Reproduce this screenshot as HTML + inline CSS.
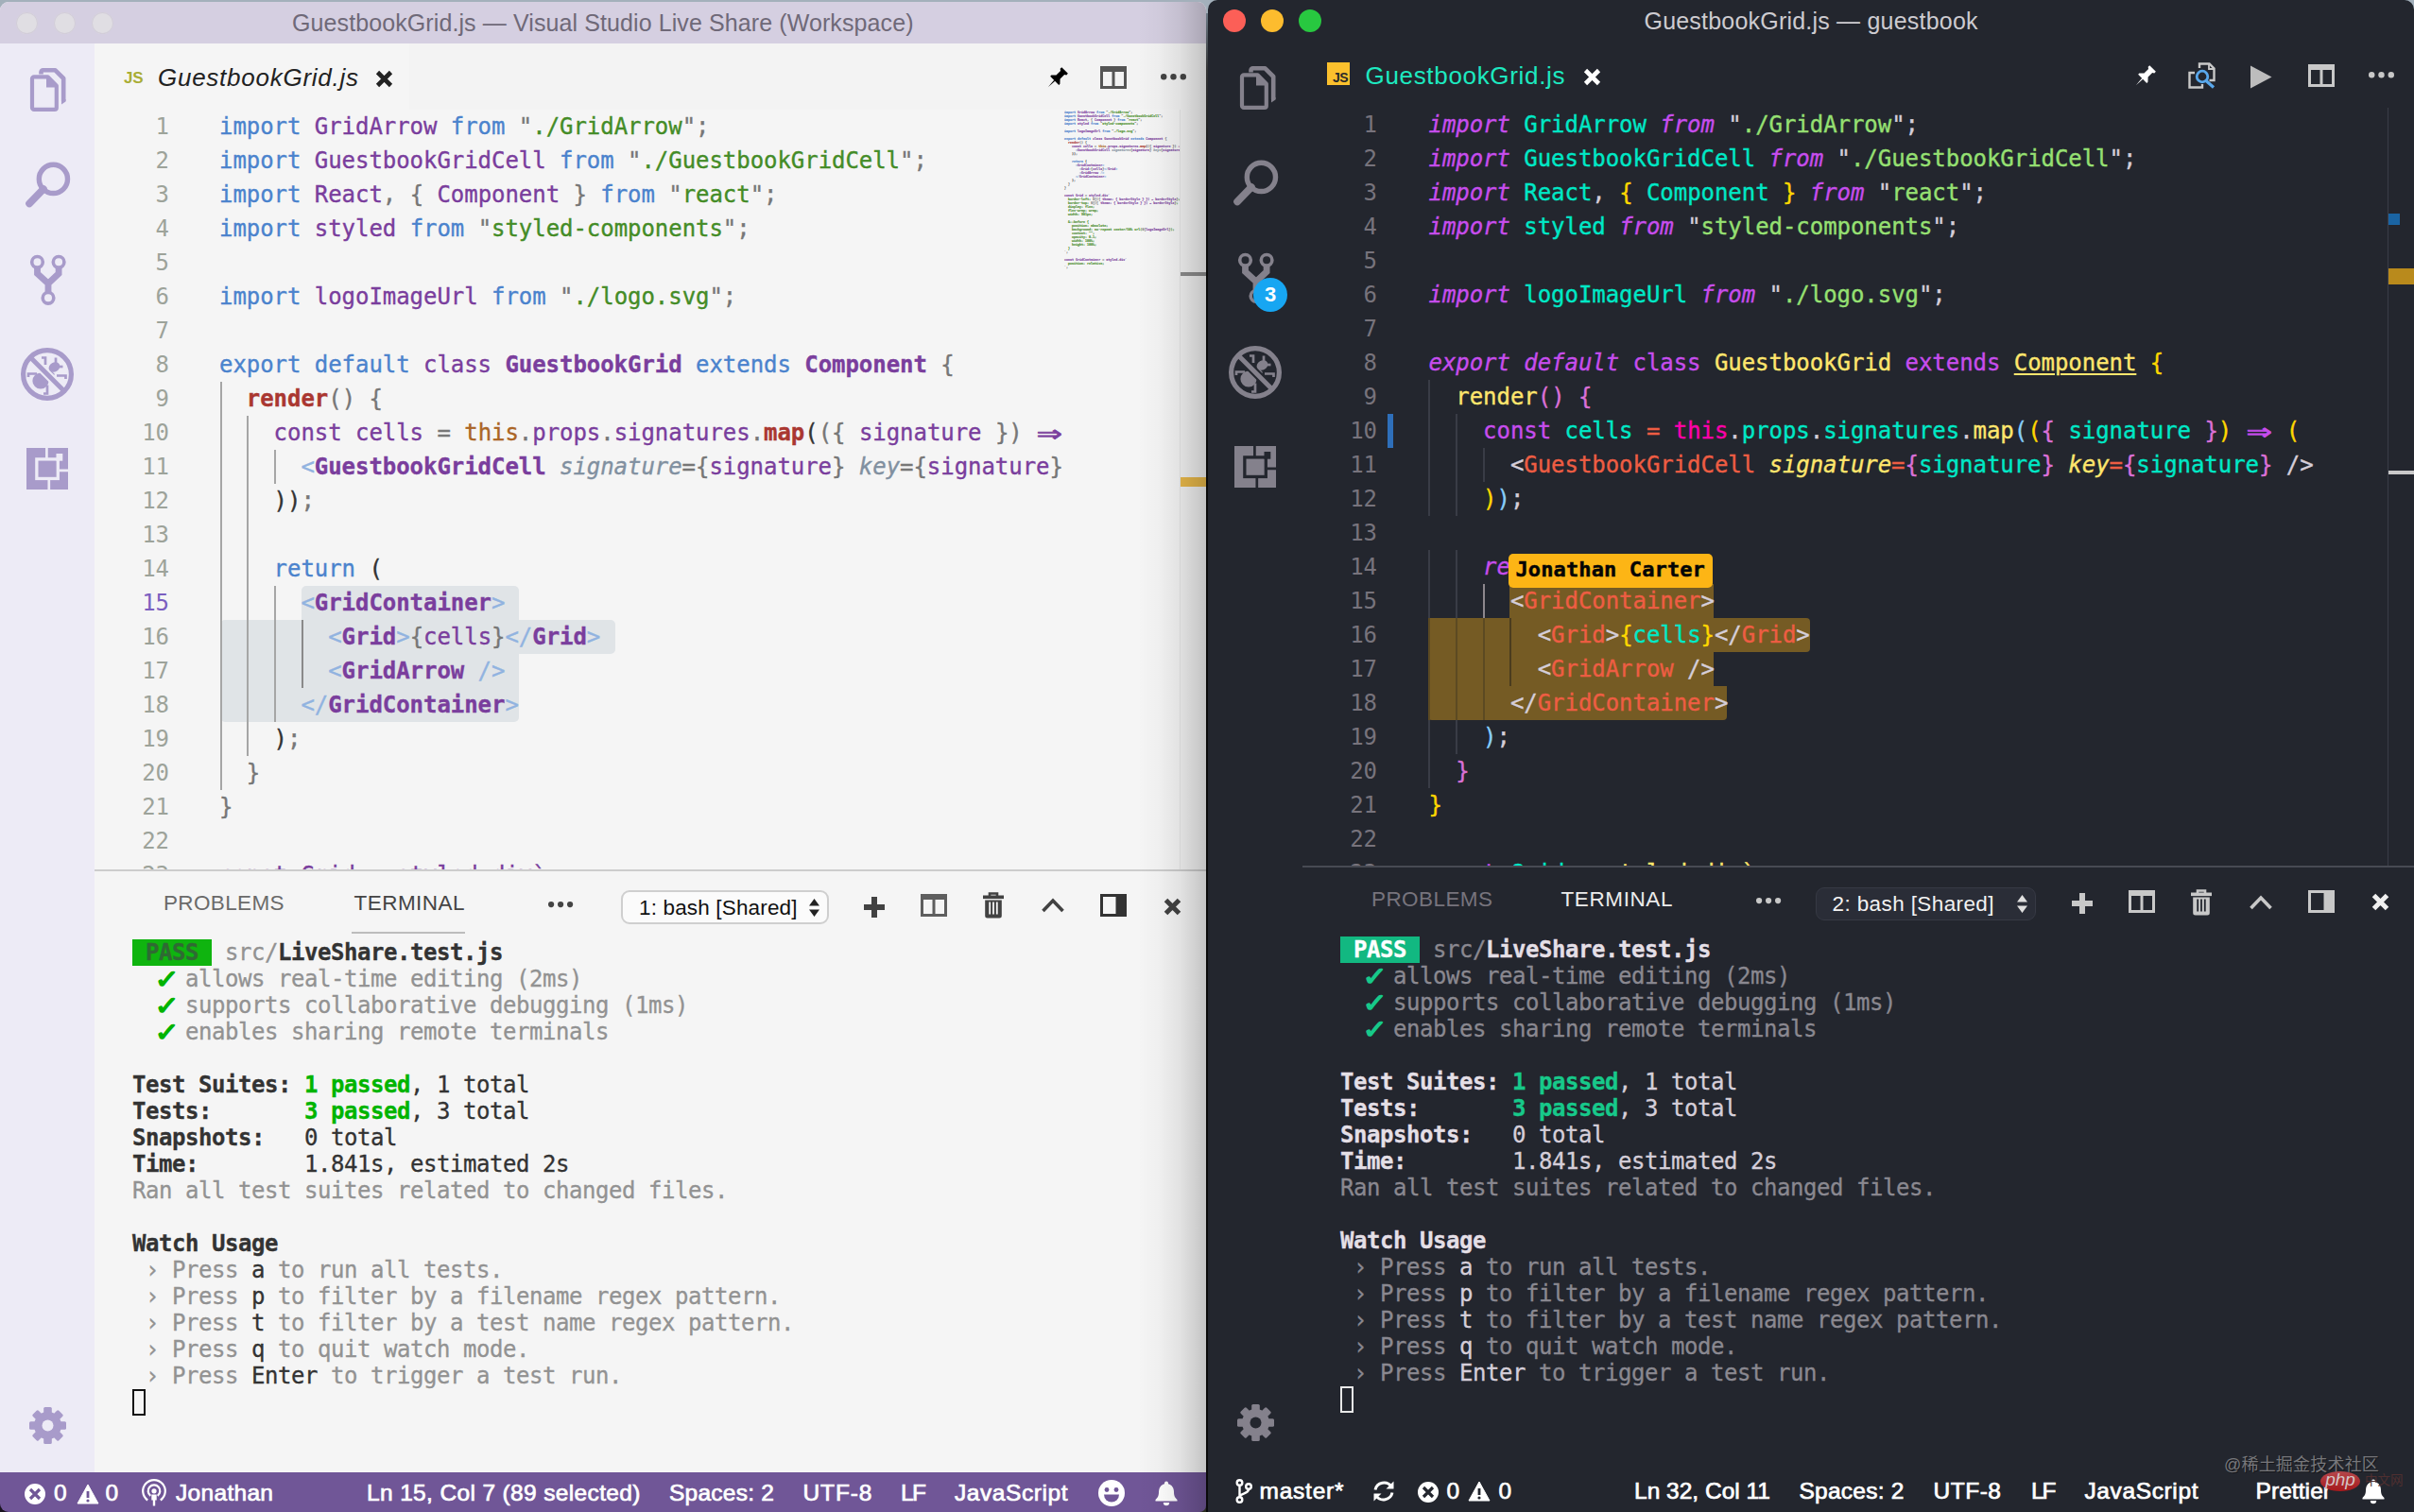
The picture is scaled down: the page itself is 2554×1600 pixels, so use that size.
<!DOCTYPE html>
<html lang="en"><head><meta charset="utf-8"><title>VS Live Share</title>
<style>
html,body{margin:0;padding:0}
body{width:2554px;height:1600px;overflow:hidden;position:relative;background:#a3b0bb;font-family:'Liberation Sans','Noto Sans CJK SC',sans-serif}
.abs,.t,.ic{position:absolute}
.t{white-space:pre}
.ic{overflow:visible}
.code{-webkit-text-stroke:0.35px currentColor;position:absolute;font:24px 'DejaVu Sans Mono','Liberation Mono',monospace;line-height:36px;white-space:pre;letter-spacing:-0.05px}
.ln{height:36px}
.nums{position:absolute;width:80px;text-align:right;font:24px 'DejaVu Sans Mono','Liberation Mono',monospace;line-height:36px;letter-spacing:-0.05px}
.num{height:36px}
.g{position:absolute;width:2px}
.sel{position:absolute;height:36px}
/* quiet light */
.ql{color:#777}
.ql .k{color:#4b83cd}
.ql .ex{color:#4b83cd}
.ql .v{color:#7a3e9d}
.ql .st{color:#7a3e9d}
.ql .s{color:#448c27}
.ql .q{color:#777}
.ql .p,.ql .op,.ql .b0,.ql .b1,.ql .b2{color:#777}
.ql .pd{color:#333}
.ql .cn,.ql .tg{color:#7a3e9d;font-weight:bold}
.ql .fn,.ql .fc{color:#aa3731;font-weight:bold}
.ql .th{color:#ab6526}
.ql .ar{color:#7a3e9d}
.ql .tf{color:#7a3e9d}
.ar{display:inline-block;width:28.8px;height:36px;vertical-align:top;overflow:visible}
.ar i{display:inline-block;font-style:normal;transform-origin:0 50%;transform:translateX(1px) scale(1.85,1.25);-webkit-text-stroke:.6px currentColor}
.ql .tp{color:#91b3e0}
.ql .at{color:#8190a0;font-style:italic}
/* andromeda */
.an{color:#d5ced9}
.an .k{color:#c74ded;font-style:italic}
.an .ex,.an .st,.an .ar{color:#c74ded}
.an .v{color:#00e8c6}
.an .s{color:#96e072}
.an .q,.an .p,.an .tp{color:#d5ced9}
.an .op{color:#ee5d43}
.an .b0{color:#ffd700}
.an .b1{color:#da70d6}
.an .b2{color:#87cefa}
.an .cn,.an .fn,.an .fc{color:#ffe66d}
.an .inh{text-decoration:underline;text-decoration-thickness:2px;text-underline-offset:3px}
.an .th{color:#ff00aa}
.an .tf{color:#ffe66d}
.an .tg{color:#ee5d43}
.an .at{color:#ffe66d;font-style:italic}
.term{-webkit-text-stroke:0.3px currentColor;position:absolute;font:24px 'DejaVu Sans Mono','Liberation Mono',monospace;line-height:28px;white-space:pre;letter-spacing:-0.45px}
.term div{height:28px}
.term b{font-weight:bold}
.term .ck{display:inline-block;transform:translate(1px,0) scale(1.5,1.3);-webkit-text-stroke:1px currentColor}
.lterm{color:#333}
.lterm .d{color:#929292}
.lterm .g{position:static;color:#00b400;font-weight:bold;width:auto}
.lterm .pass{background:#0fb40f;color:#2f6a33;font-weight:bold}
.rterm{color:#d5ced9}
.rterm .d{color:#8a8890}
.rterm .g{position:static;color:#17c98a;font-weight:bold;width:auto}
.rterm .pass{background:#12b881;color:#fff;font-weight:bold}
.rterm b{color:#e4dfe6}
.mini{position:absolute;transform-origin:0 0;transform:scale(0.1389,0.1111);font:24px 'DejaVu Sans Mono','Liberation Mono',monospace;line-height:36px;white-space:pre;font-weight:bold}
</style></head>
<body>
<div class="abs" style="left:0px;top:2px;width:1276px;height:1598px;background:#f5f5f5;border-radius:9px 9px 7px 8px"></div>
<div class="abs" style="left:0px;top:2px;width:1276px;height:44px;background:#d5cfe1;border-radius:9px 9px 0 0"></div>
<div class="abs" style="left:16.5px;top:12.5px;width:23px;height:23px;border-radius:50%;background:#e0dee3;box-shadow:inset 0 0 0 1px #d2cdd9"></div>
<div class="abs" style="left:56.5px;top:12.5px;width:23px;height:23px;border-radius:50%;background:#e0dee3;box-shadow:inset 0 0 0 1px #d2cdd9"></div>
<div class="abs" style="left:96.5px;top:12.5px;width:23px;height:23px;border-radius:50%;background:#e0dee3;box-shadow:inset 0 0 0 1px #d2cdd9"></div>
<div class="t" style="left:309.0px;top:9.0px;font:normal normal 25px 'Liberation Sans','Noto Sans CJK SC',sans-serif;line-height:30.0px;letter-spacing:0.099px;color:#6f6978;">GuestbookGrid.js — Visual Studio Live Share (Workspace)</div>
<div class="abs" style="left:0px;top:46px;width:100px;height:1512px;background:#edebf6;"></div>
<div class="abs" style="left:100px;top:46px;width:1176px;height:70px;background:#f3f3f3;"></div>
<div class="abs" style="left:100px;top:46px;width:333px;height:70px;background:#f5f5f5;"></div>
<svg class="ic" style="left:29px;top:72px" width="41" height="46" viewBox="0 0 41 46" ><g fill="none" stroke="#a89bca" stroke-linejoin="round"><path d="M14.500 6.500V4.300a2 2 0 0 1 2-2H29.500L38.200 11V35" stroke-width="4.6"/><path d="M7 9.300H21.500l9.300 9.500V41.900a2 2 0 0 1-2 2H7a2 2 0 0 1-2-2V11.300a2 2 0 0 1 2-2z" stroke-width="4.2"/></g><path d="M20 9v11.500h11z" fill="#a89bca"/><path d="M36 33h4.500v2.500l-4.500 3z" fill="#a89bca"/></svg>
<svg class="ic" style="left:27px;top:172px" width="47" height="48" viewBox="0 0 47 48" ><circle cx="29.4" cy="17.4" r="15.1" fill="none" stroke="#a89bca" stroke-width="5.4"/><path d="M19 28L4 43.500" stroke="#a89bca" stroke-width="7.6" stroke-linecap="round"/></svg>
<svg class="ic" style="left:32px;top:269.5px" width="38" height="53" viewBox="0 0 38 53" ><g fill="none" stroke="#a89bca"><path d="M7.5 12.5V19.5L19 30V40M30.1 12.5V19.5L19 30" stroke-width="6.8" stroke-linejoin="miter"/><circle cx="7.5" cy="7.3" r="5.8" stroke-width="3.6" fill="#edebf6"/><circle cx="30.100" cy="7.3" r="5.8" stroke-width="3.6" fill="#edebf6"/><circle cx="19" cy="45.3" r="5.8" stroke-width="3.6" fill="#edebf6"/></g></svg>
<svg class="ic" style="left:22px;top:368px" width="56" height="56" viewBox="0 0 56 56" ><g fill="#a89bca"><circle cx="21" cy="35" r="8.6"/><ellipse cx="35.5" cy="20.5" rx="6.2" ry="5" transform="rotate(-30 35.5 20.5)"/><path d="M25 29l6-6 5 5-6 6z"/></g><g stroke="#a89bca" stroke-width="2.7" fill="none"><path d="M22 10.5h4v7.500"/><path d="M37 10.500v6"/><path d="M39 20h5.500"/><path d="M8 31v-3.500h9"/><path d="M24 48.500h4v-9"/><path d="M38 29.500h9.500v3.500"/></g><path d="M10.500 10.500L45.500 45.500" stroke="#edebf6" stroke-width="9"/><circle cx="28" cy="28" r="25.4" fill="none" stroke="#a89bca" stroke-width="5.2"/><path d="M10.500 10.500L45.500 45.500" stroke="#a89bca" stroke-width="5"/></svg>
<svg class="ic" style="left:28px;top:474px" width="44" height="44" viewBox="0 0 44 44" ><rect x="0" y="0" width="44" height="44" fill="#a89bca"/><rect x="10.85" y="11.9" width="22.45" height="20.55" fill="none" stroke="#edebf6" stroke-width="3.3"/><g stroke="#edebf6" stroke-width="2.7"><path d="M21.4 0V11M34.500 23.800H44M23.800 33.500V44"/></g><rect x="31.5" y="6" width="6.8" height="7.700" fill="#edebf6"/></svg>
<svg class="ic" style="left:30.5px;top:1488.5px" width="39" height="39" viewBox="0 0 39 39" ><g fill="#a89bca"><rect x="15.2" y="0" width="8.6" height="39" rx="1.5" transform="rotate(0 19.5 19.5)"/><rect x="15.2" y="0" width="8.6" height="39" rx="1.5" transform="rotate(45 19.5 19.5)"/><rect x="15.2" y="0" width="8.6" height="39" rx="1.5" transform="rotate(90 19.5 19.5)"/><rect x="15.2" y="0" width="8.6" height="39" rx="1.5" transform="rotate(135 19.5 19.5)"/><circle cx="19.5" cy="19.5" r="14.5"/></g><circle cx="19.5" cy="19.5" r="6" fill="#edebf6"/></svg>
<div class="t" style="left:131px;top:71px;font:bold 17px 'Liberation Sans','Noto Sans CJK SC',sans-serif;line-height:24px;color:#a9ad35;letter-spacing:-0.3px">JS</div>
<div class="t" style="left:167.0px;top:66.9px;font:italic normal 26px 'Liberation Sans','Noto Sans CJK SC',sans-serif;line-height:31.2px;letter-spacing:0.742px;color:#222;">GuestbookGrid.js</div>
<svg class="ic" style="left:398px;top:75px" width="17" height="17" viewBox="0 0 17 17" ><path d="M1.5 1.5L15.5 15.5M15.5 1.5L1.5 15.5" stroke="#222" stroke-width="4.6"/></svg>
<svg class="ic" style="left:1105px;top:68px" width="27" height="27" viewBox="-2 -3 26 26" ><g transform="rotate(45 11 11)" fill="#000"><path d="M6.5 0h9v2.2l-1.7 1.2v6.2l3.4 3.6v1.6H4.8v-1.6l3.4-3.6V3.4L6.5 2.2z"/><path d="M10.3 14.8h1.4l-.7 9.5z"/></g></svg>
<svg class="ic" style="left:1164px;top:70px" width="28" height="24" viewBox="0 0 28 24" ><rect x="1.5" y="3" width="25" height="19.5" fill="none" stroke="#555" stroke-width="3"/><rect x="0" y="0" width="28" height="6" fill="#555"/><rect x="12.5" y="3" width="3" height="20" fill="#555"/></svg>
<svg class="ic" style="left:1228px;top:78px" width="28" height="7" viewBox="0 0 28 7" ><circle cx="3.2" cy="3.2" r="3.2" fill="#444"/><circle cx="13.5" cy="3.2" r="3.2" fill="#444"/><circle cx="23.8" cy="3.2" r="3.2" fill="#444"/></svg>
<div class="sel" style="left:318.5px;top:620px;width:230.5px;background:#e0e4e7;border-radius:5px 5px 0 0"></div>
<div class="sel" style="left:233px;top:656px;width:418px;background:#e0e4e7;border-radius:5px 5px 5px 0"></div>
<div class="sel" style="left:233px;top:692px;width:316px;background:#e0e4e7;border-radius:0"></div>
<div class="sel" style="left:233px;top:728px;width:316px;background:#e0e4e7;border-radius:0 0 5px 5px"></div>
<div class="g" style="left:232.5px;top:404px;height:432px;background:#a6a6a6"></div>
<div class="g" style="left:261px;top:440px;height:360px;background:#a6a6a6"></div>
<div class="g" style="left:290px;top:476px;height:36px;background:#a6a6a6"></div>
<div class="g" style="left:290px;top:620px;height:144px;background:#a6a6a6"></div>
<div class="g" style="left:318.5px;top:656px;height:72px;background:#8a8a8a"></div>
<div class="nums" style="left:99px;top:116px;color:#9da39a"><div class="num">1</div><div class="num">2</div><div class="num">3</div><div class="num">4</div><div class="num">5</div><div class="num">6</div><div class="num">7</div><div class="num">8</div><div class="num">9</div><div class="num">10</div><div class="num">11</div><div class="num">12</div><div class="num">13</div><div class="num">14</div><div class="num" style="color:#7b5fc0">15</div><div class="num">16</div><div class="num">17</div><div class="num">18</div><div class="num">19</div><div class="num">20</div><div class="num">21</div><div class="num">22</div><div class="num">23</div></div>
<div class="code ql" style="left:232px;top:116px"><div class="ln"><span class="k">import</span> <span class="v">GridArrow</span> <span class="k">from</span> <span class="q">"</span><span class="s">./GridArrow</span><span class="q">"</span><span class="p">;</span></div><div class="ln"><span class="k">import</span> <span class="v">GuestbookGridCell</span> <span class="k">from</span> <span class="q">"</span><span class="s">./GuestbookGridCell</span><span class="q">"</span><span class="p">;</span></div><div class="ln"><span class="k">import</span> <span class="v">React</span><span class="p">,</span> <span class="b0">{</span> <span class="v">Component</span> <span class="b0">}</span> <span class="k">from</span> <span class="q">"</span><span class="s">react</span><span class="q">"</span><span class="p">;</span></div><div class="ln"><span class="k">import</span> <span class="v">styled</span> <span class="k">from</span> <span class="q">"</span><span class="s">styled-components</span><span class="q">"</span><span class="p">;</span></div><div class="ln">&nbsp;</div><div class="ln"><span class="k">import</span> <span class="v">logoImageUrl</span> <span class="k">from</span> <span class="q">"</span><span class="s">./logo.svg</span><span class="q">"</span><span class="p">;</span></div><div class="ln">&nbsp;</div><div class="ln"><span class="k">export</span> <span class="k">default</span> <span class="st">class</span> <span class="cn">GuestbookGrid</span> <span class="ex">extends</span> <span class="cn inh">Component</span> <span class="b0">{</span></div><div class="ln">  <span class="fn">render</span><span class="b1">(</span><span class="b1">)</span> <span class="b1">{</span></div><div class="ln">    <span class="st">const</span> <span class="v">cells</span> <span class="op">=</span> <span class="th">this</span><span class="p">.</span><span class="v">props</span><span class="p">.</span><span class="v">signatures</span><span class="p">.</span><span class="fc">map</span><span class="b2 pd">(</span><span class="b0">(</span><span class="b1">{</span> <span class="v">signature</span> <span class="b1">}</span><span class="b0">)</span> <span class="ar"><i>⇒</i></span></div><div class="ln">      <span class="tp">&lt;</span><span class="tg">GuestbookGridCell</span> <span class="at">signature</span><span class="op">=</span><span class="b1">{</span><span class="v">signature</span><span class="b1">}</span> <span class="at">key</span><span class="op">=</span><span class="b1">{</span><span class="v">signature</span><span class="b1">}</span></div><div class="ln">    <span class="b0 pd">)</span><span class="b2 pd">)</span><span class="p">;</span></div><div class="ln">&nbsp;</div><div class="ln">    <span class="k">return</span> <span class="b2 pd">(</span></div><div class="ln">      <span class="tp">&lt;</span><span class="tg">GridContainer</span><span class="tp">&gt;</span></div><div class="ln">        <span class="tp">&lt;</span><span class="tg">Grid</span><span class="tp">&gt;</span><span class="b0">{</span><span class="v">cells</span><span class="b0">}</span><span class="tp">&lt;/</span><span class="tg">Grid</span><span class="tp">&gt;</span></div><div class="ln">        <span class="tp">&lt;</span><span class="tg">GridArrow</span> <span class="tp">/&gt;</span></div><div class="ln">      <span class="tp">&lt;/</span><span class="tg">GridContainer</span><span class="tp">&gt;</span></div><div class="ln">    <span class="b2 pd">)</span><span class="p">;</span></div><div class="ln">  <span class="b1">}</span></div><div class="ln"><span class="b0">}</span></div><div class="ln">&nbsp;</div><div class="ln"><span class="st">const</span> <span class="v">Grid</span> <span class="op">=</span> <span class="tf">styled</span><span class="p">.</span><span class="tf">div</span><span class="tf">`</span></div></div>
<div class="abs" style="left:1124px;top:116px;width:125px;height:805px;background:#f5f5f5;"></div>
<div class="mini ql" style="left:1126px;top:116.5px;opacity:.92;-webkit-text-stroke:1px currentColor"><div class="ln"><span class="k">import</span> <span class="v">GridArrow</span> <span class="k">from</span> <span class="q">"</span><span class="s">./GridArrow</span><span class="q">"</span><span class="p">;</span></div><div class="ln"><span class="k">import</span> <span class="v">GuestbookGridCell</span> <span class="k">from</span> <span class="q">"</span><span class="s">./GuestbookGridCell</span><span class="q">"</span><span class="p">;</span></div><div class="ln"><span class="k">import</span> <span class="v">React</span><span class="p">,</span> <span class="b0">{</span> <span class="v">Component</span> <span class="b0">}</span> <span class="k">from</span> <span class="q">"</span><span class="s">react</span><span class="q">"</span><span class="p">;</span></div><div class="ln"><span class="k">import</span> <span class="v">styled</span> <span class="k">from</span> <span class="q">"</span><span class="s">styled-components</span><span class="q">"</span><span class="p">;</span></div><div class="ln">&nbsp;</div><div class="ln"><span class="k">import</span> <span class="v">logoImageUrl</span> <span class="k">from</span> <span class="q">"</span><span class="s">./logo.svg</span><span class="q">"</span><span class="p">;</span></div><div class="ln">&nbsp;</div><div class="ln"><span class="k">export</span> <span class="k">default</span> <span class="st">class</span> <span class="cn">GuestbookGrid</span> <span class="ex">extends</span> <span class="cn inh">Component</span> <span class="b0">{</span></div><div class="ln">  <span class="fn">render</span><span class="b1">(</span><span class="b1">)</span> <span class="b1">{</span></div><div class="ln">    <span class="st">const</span> <span class="v">cells</span> <span class="op">=</span> <span class="th">this</span><span class="p">.</span><span class="v">props</span><span class="p">.</span><span class="v">signatures</span><span class="p">.</span><span class="fc">map</span><span class="b2 pd">(</span><span class="b0">(</span><span class="b1">{</span> <span class="v">signature</span> <span class="b1">}</span><span class="b0">)</span> <span class="ar"><i>⇒</i></span></div><div class="ln">      <span class="tp">&lt;</span><span class="tg">GuestbookGridCell</span> <span class="at">signature</span><span class="op">=</span><span class="b1">{</span><span class="v">signature</span><span class="b1">}</span> <span class="at">key</span><span class="op">=</span><span class="b1">{</span><span class="v">signature</span><span class="b1">}</span></div><div class="ln">    <span class="b0 pd">)</span><span class="b2 pd">)</span><span class="p">;</span></div><div class="ln">&nbsp;</div><div class="ln">    <span class="k">return</span> <span class="b2 pd">(</span></div><div class="ln">      <span class="tp">&lt;</span><span class="tg">GridContainer</span><span class="tp">&gt;</span></div><div class="ln">        <span class="tp">&lt;</span><span class="tg">Grid</span><span class="tp">&gt;</span><span class="b0">{</span><span class="v">cells</span><span class="b0">}</span><span class="tp">&lt;/</span><span class="tg">Grid</span><span class="tp">&gt;</span></div><div class="ln">        <span class="tp">&lt;</span><span class="tg">GridArrow</span> <span class="tp">/&gt;</span></div><div class="ln">      <span class="tp">&lt;/</span><span class="tg">GridContainer</span><span class="tp">&gt;</span></div><div class="ln">    <span class="b2 pd">)</span><span class="p">;</span></div><div class="ln">  <span class="b1">}</span></div><div class="ln"><span class="b0">}</span></div><div class="ln">&nbsp;</div><div class="ln"><span class="st">const</span> <span class="v">Grid</span> <span class="op">=</span> <span class="tf">styled</span><span class="p">.</span><span class="tf">div</span><span class="tf">`</span></div><div class="ln"><span class="s">  border-left: </span><span class="p">${</span><span class="p">({ </span><span class="v">theme: { borderStyle } </span><span class="v">}) ⇒ borderStyle</span><span class="p">}</span><span class="s">;</span></div><div class="ln"><span class="s">  border-top: </span><span class="p">${</span><span class="p">({ </span><span class="v">theme: { borderStyle } </span><span class="v">}) ⇒ borderStyle</span><span class="p">}</span><span class="s">;</span></div><div class="ln"><span class="s">  display: flex;</span></div><div class="ln"><span class="s">  flex-wrap: wrap;</span></div><div class="ln"><span class="s">  width: 901px;</span></div><div class="ln">&nbsp;</div><div class="ln"><span class="s">  &amp;::before {</span></div><div class="ln"><span class="s">    position: absolute;</span></div><div class="ln"><span class="s">    background: no-repeat center/50% url(</span><span class="p">${</span><span class="v">logoImageUrl</span><span class="p">}</span><span class="s">);</span></div><div class="ln"><span class="s">    content: "";</span></div><div class="ln"><span class="s">    opacity: 0.1;</span></div><div class="ln"><span class="s">    width: 100%;</span></div><div class="ln"><span class="s">    height: 100%;</span></div><div class="ln"><span class="s">  }</span></div><div class="ln"><span class="q">`</span><span class="p">;</span></div><div class="ln">&nbsp;</div><div class="ln"><span class="st">const</span> <span class="v">GridContainer</span> <span class="op">=</span> <span class="tf">styled</span><span class="p">.</span><span class="tf">div</span><span class="tf">`</span></div><div class="ln"><span class="s">  position: relative;</span></div><div class="ln"><span class="q">`</span><span class="p">;</span></div></div>
<div class="abs" style="left:1248px;top:116px;width:28px;height:805px;background:#f3f3f3;box-shadow:inset 1px 0 0 #e6e6e6"></div>
<div class="abs" style="left:1249px;top:288px;width:27px;height:4px;background:#8d8d8d;"></div>
<div class="abs" style="left:1249px;top:505px;width:27px;height:10px;background:#e9b94a;"></div>
<div class="abs" style="left:100px;top:921px;width:1176px;height:637px;background:#f5f5f5;"></div>
<div class="abs" style="left:100px;top:920px;width:1176px;height:2px;background:#cdcdcd;"></div>
<div class="t" style="left:173.0px;top:941.5px;font:normal normal 22.5px 'Liberation Sans','Noto Sans CJK SC',sans-serif;line-height:27.0px;letter-spacing:0.350px;color:#6a6a6a;">PROBLEMS</div>
<div class="t" style="left:374.5px;top:941.5px;font:normal normal 22.5px 'Liberation Sans','Noto Sans CJK SC',sans-serif;line-height:27.0px;letter-spacing:0.462px;color:#444;">TERMINAL</div>
<div class="abs" style="left:372px;top:986px;width:120px;height:2px;background:#bdbdbd;"></div>
<svg class="ic" style="left:580px;top:953.5px" width="27" height="7" viewBox="0 0 27 7" ><circle cx="3.1" cy="3.1" r="3.1" fill="#444"/><circle cx="13.1" cy="3.1" r="3.1" fill="#444"/><circle cx="23.1" cy="3.1" r="3.1" fill="#444"/></svg>
<div class="abs" style="left:657px;top:941.5px;width:216px;height:32px;border:2px solid #cfcfcf;border-radius:9px;background:#fbfbfb"></div>
<div class="t" style="left:676.0px;top:946.5px;font:normal normal 22.5px 'Liberation Sans','Noto Sans CJK SC',sans-serif;line-height:27.0px;letter-spacing:0.158px;color:#111;">1: bash [Shared]</div>
<svg class="ic" style="left:856px;top:951px" width="11" height="19" viewBox="0 0 11 19" ><path d="M5.5 0L11 7.5H0zM5.5 19L11 11.5H0z" fill="#222"/></svg>
<svg class="ic" style="left:914px;top:948.5px" width="22" height="22" viewBox="0 0 22 22" ><path d="M11 0v22M0 11h22" stroke="#424242" stroke-width="6"/></svg>
<svg class="ic" style="left:974px;top:945.5px" width="28" height="24" viewBox="0 0 28 24" ><rect x="1.5" y="3" width="25" height="19.5" fill="none" stroke="#5e5e5e" stroke-width="3"/><rect x="0" y="0" width="28" height="6" fill="#5e5e5e"/><rect x="12.5" y="3" width="3" height="20" fill="#5e5e5e"/></svg>
<svg class="ic" style="left:1040px;top:944px" width="22" height="28" viewBox="0 0 22 28" ><path d="M7 4V1.5h8V4" fill="none" stroke="#424242" stroke-width="2.6"/><rect x="0" y="3.5" width="22" height="3.6" fill="#424242"/><path d="M2.2 8.5h17.6v16.5a2.5 2.5 0 0 1-2.5 2.5H4.7a2.5 2.5 0 0 1-2.5-2.5z" fill="#424242"/></svg>
<svg class="ic" style="left:1040px;top:944px" width="22" height="28" viewBox="0 0 22 28" ><path d="M7.2 10.5v13M11 10.5v13M14.8 10.5v13" stroke="#f5f5f5" stroke-width="1.8"/></svg>
<svg class="ic" style="left:1102px;top:949.5px" width="24" height="16" viewBox="0 0 24 16" ><path d="M1.5 14L12 3l10.5 11" fill="none" stroke="#424242" stroke-width="3.6"/></svg>
<svg class="ic" style="left:1164px;top:945.5px" width="28" height="24" viewBox="0 0 28 24" ><rect x="1.5" y="1.5" width="25" height="21" fill="none" stroke="#333" stroke-width="3"/><rect x="16.5" y="0" width="11.5" height="24" fill="#333"/></svg>
<svg class="ic" style="left:1232px;top:950.5px" width="17" height="17" viewBox="0 0 17 17" ><path d="M1.5 1.5L15.5 15.5M15.5 1.5L1.5 15.5" stroke="#424242" stroke-width="5"/></svg>
<div class="term lterm" style="left:140px;top:994px"><div><span class="pass"> PASS </span> <span class="d">src/</span><b>LiveShare.test.js</b></div><div>  <span class="g ck">✓</span> <span class="d">allows real-time editing (2ms)</span></div><div>  <span class="g ck">✓</span> <span class="d">supports collaborative debugging (1ms)</span></div><div>  <span class="g ck">✓</span> <span class="d">enables sharing remote terminals</span></div><div>&nbsp;</div><div><b>Test Suites: </b><span class="g">1 passed</span>, 1 total</div><div><b>Tests:       </b><span class="g">3 passed</span>, 3 total</div><div><b>Snapshots:   </b>0 total</div><div><b>Time:</b>        1.841s, estimated 2s</div><div><span class="d">Ran all test suites related to changed files.</span></div><div>&nbsp;</div><div><b>Watch Usage</b></div><div><span class="d"> › Press </span>a<span class="d"> to run all tests.</span></div><div><span class="d"> › Press </span>p<span class="d"> to filter by a filename regex pattern.</span></div><div><span class="d"> › Press </span>t<span class="d"> to filter by a test name regex pattern.</span></div><div><span class="d"> › Press </span>q<span class="d"> to quit watch mode.</span></div><div><span class="d"> › Press </span>Enter<span class="d"> to trigger a test run.</span></div></div>
<div class="abs" style="left:140px;top:1470px;width:10px;height:24px;border:2px solid #111"></div>
<div class="abs" style="left:0px;top:1585px;width:16px;height:15px;background:#1a1420;"></div>
<div class="abs" style="left:1262px;top:1588px;width:14px;height:12px;background:#2a2d20;"></div>
<div class="abs" style="left:0px;top:1558px;width:1276px;height:42px;background:#705697;border-radius:0 0 7px 9px"></div>
<svg class="ic" style="left:26px;top:1570px" width="22" height="22" viewBox="0 0 22 22" ><circle cx="11" cy="11" r="11" fill="#fff"/><path d="M6 6l10 10M16 6L6 16" stroke="#705697" stroke-width="3.2"/></svg>
<div class="t" style="left:57.0px;top:1564.8px;font:normal normal 24.5px 'Liberation Sans','Noto Sans CJK SC',sans-serif;line-height:29.4px;letter-spacing:-0.641px;color:#fff;-webkit-text-stroke:.7px currentColor;">0</div>
<svg class="ic" style="left:82px;top:1569.5px" width="22" height="22" viewBox="0 0 22 22" ><path d="M11 1L22 21H0z" fill="#fff" stroke="#fff" stroke-width="1" stroke-linejoin="round"/><path d="M11 8v7" stroke="#705697" stroke-width="2.8"/><circle cx="11" cy="18" r="1.6" fill="#705697"/></svg>
<div class="t" style="left:111.5px;top:1564.8px;font:normal normal 24.5px 'Liberation Sans','Noto Sans CJK SC',sans-serif;line-height:29.4px;letter-spacing:-0.141px;color:#fff;-webkit-text-stroke:.7px currentColor;">0</div>
<svg class="ic" style="left:150px;top:1566px" width="26" height="28" viewBox="0 0 26 28" ><g fill="none" stroke="#fff" stroke-width="2.2"><path d="M6.2 21.500A11.800 11.800 0 1 1 19.800 21.500"/><path d="M9.300 16.800A6.300 6.300 0 1 1 16.700 16.800"/></g><circle cx="13" cy="11.800" r="2.6" fill="#fff"/><path d="M10.300 15.500h5.400v6h-1.500v6h-2.400v-6h-1.500z" fill="#fff"/></svg>
<div class="t" style="left:186.0px;top:1564.8px;font:normal normal 24.5px 'Liberation Sans','Noto Sans CJK SC',sans-serif;line-height:29.4px;letter-spacing:0.312px;color:#fff;-webkit-text-stroke:.7px currentColor;">Jonathan</div>
<div class="t" style="left:388.0px;top:1564.8px;font:normal normal 24.5px 'Liberation Sans','Noto Sans CJK SC',sans-serif;line-height:29.4px;letter-spacing:0.357px;color:#fff;-webkit-text-stroke:.7px currentColor;">Ln 15, Col 7 (89 selected)</div>
<div class="t" style="left:708.0px;top:1564.8px;font:normal normal 24.5px 'Liberation Sans','Noto Sans CJK SC',sans-serif;line-height:29.4px;letter-spacing:0.254px;color:#fff;-webkit-text-stroke:.7px currentColor;">Spaces: 2</div>
<div class="t" style="left:849.5px;top:1564.8px;font:normal normal 24.5px 'Liberation Sans','Noto Sans CJK SC',sans-serif;line-height:29.4px;letter-spacing:0.895px;color:#fff;-webkit-text-stroke:.7px currentColor;">UTF-8</div>
<div class="t" style="left:953.0px;top:1564.8px;font:normal normal 24.5px 'Liberation Sans','Noto Sans CJK SC',sans-serif;line-height:29.4px;letter-spacing:-1.594px;color:#fff;-webkit-text-stroke:.7px currentColor;">LF</div>
<div class="t" style="left:1010.0px;top:1564.8px;font:normal normal 24.5px 'Liberation Sans','Noto Sans CJK SC',sans-serif;line-height:29.4px;letter-spacing:0.568px;color:#fff;-webkit-text-stroke:.7px currentColor;">JavaScript</div>
<svg class="ic" style="left:1162px;top:1566px" width="28" height="28" viewBox="0 0 28 28" ><circle cx="14" cy="14" r="14" fill="#fff"/><circle cx="9" cy="10.5" r="2.4" fill="#705697"/><circle cx="19" cy="10.5" r="2.4" fill="#705697"/><path d="M6 15.500a8 8 0 0 0 16 0z" fill="#705697"/></svg>
<svg class="ic" style="left:1222px;top:1567px" width="24" height="27" viewBox="0 0 24 27" ><path d="M12 0.5a2 2 0 0 1 2 2v0.8c4 1 6 4.5 6 8.7 0 4.5 1.5 6 3.5 8v1.5H0.5V20c2-2 3.5-3.5 3.5-8 0-4.2 2-7.7 6-8.7V2.500a2 2 0 0 1 2-2z" fill="#fff"/><path d="M8.8 23h6.4a3.2 3.2 0 0 1-6.400 0z" fill="#fff"/></svg>
<div class="abs" style="left:1204px;top:2px;width:72px;height:1598px;background:linear-gradient(90deg,rgba(0,0,0,0),rgba(0,0,0,.025) 30%,rgba(0,0,0,.08) 62%,rgba(0,0,0,.2) 100%);border-radius:0 9px 7px 0"></div>
<div class="abs" style="left:1276px;top:14px;width:2px;height:1586px;background:linear-gradient(180deg,#6c7a86 0,#333 60px,#0a0a0a 200px);"></div>
<div class="abs" style="left:1278px;top:0px;width:1276px;height:1600px;background:#23262e;border-radius:10px 10px 8px 0"></div>
<div class="abs" style="left:1294px;top:10px;width:24px;height:24px;border-radius:50%;background:#fc5f57"></div>
<div class="abs" style="left:1334px;top:10px;width:24px;height:24px;border-radius:50%;background:#fdbc2e"></div>
<div class="abs" style="left:1374px;top:10px;width:24px;height:24px;border-radius:50%;background:#28c840"></div>
<div class="t" style="left:1739.5px;top:6.5px;font:normal normal 25px 'Liberation Sans','Noto Sans CJK SC',sans-serif;line-height:30.0px;letter-spacing:0.207px;color:#cdcbd0;">GuestbookGrid.js — guestbook</div>
<svg class="ic" style="left:1309px;top:70px" width="41" height="46" viewBox="0 0 41 46" ><g fill="none" stroke="#84818c" stroke-linejoin="round"><path d="M14.500 6.500V4.300a2 2 0 0 1 2-2H29.500L38.200 11V35" stroke-width="4.6"/><path d="M7 9.300H21.500l9.300 9.500V41.900a2 2 0 0 1-2 2H7a2 2 0 0 1-2-2V11.300a2 2 0 0 1 2-2z" stroke-width="4.2"/></g><path d="M20 9v11.500h11z" fill="#84818c"/><path d="M36 33h4.500v2.500l-4.500 3z" fill="#84818c"/></svg>
<svg class="ic" style="left:1305px;top:170px" width="47" height="48" viewBox="0 0 47 48" ><circle cx="29.4" cy="17.4" r="15.1" fill="none" stroke="#84818c" stroke-width="5.4"/><path d="M19 28L4 43.500" stroke="#84818c" stroke-width="7.6" stroke-linecap="round"/></svg>
<svg class="ic" style="left:1310px;top:267.5px" width="38" height="53" viewBox="0 0 38 53" ><g fill="none" stroke="#84818c"><path d="M7.5 12.5V19.5L19 30V40M30.1 12.5V19.5L19 30" stroke-width="6.8" stroke-linejoin="miter"/><circle cx="7.5" cy="7.3" r="5.8" stroke-width="3.6" fill="#23262e"/><circle cx="30.100" cy="7.3" r="5.8" stroke-width="3.6" fill="#23262e"/><circle cx="19" cy="45.3" r="5.8" stroke-width="3.6" fill="#23262e"/></g></svg>
<svg class="ic" style="left:1300px;top:366px" width="56" height="56" viewBox="0 0 56 56" ><g fill="#84818c"><circle cx="21" cy="35" r="8.6"/><ellipse cx="35.5" cy="20.5" rx="6.2" ry="5" transform="rotate(-30 35.5 20.5)"/><path d="M25 29l6-6 5 5-6 6z"/></g><g stroke="#84818c" stroke-width="2.7" fill="none"><path d="M22 10.5h4v7.500"/><path d="M37 10.500v6"/><path d="M39 20h5.500"/><path d="M8 31v-3.500h9"/><path d="M24 48.500h4v-9"/><path d="M38 29.500h9.500v3.500"/></g><path d="M10.500 10.500L45.500 45.500" stroke="#23262e" stroke-width="9"/><circle cx="28" cy="28" r="25.4" fill="none" stroke="#84818c" stroke-width="5.2"/><path d="M10.500 10.500L45.500 45.500" stroke="#84818c" stroke-width="5"/></svg>
<svg class="ic" style="left:1306px;top:472px" width="44" height="44" viewBox="0 0 44 44" ><rect x="0" y="0" width="44" height="44" fill="#84818c"/><rect x="10.85" y="11.9" width="22.45" height="20.55" fill="none" stroke="#23262e" stroke-width="3.3"/><g stroke="#23262e" stroke-width="2.7"><path d="M21.4 0V11M34.500 23.800H44M23.800 33.500V44"/></g><rect x="31.5" y="6" width="6.8" height="7.700" fill="#23262e"/></svg>
<svg class="ic" style="left:1308.5px;top:1486px" width="39" height="39" viewBox="0 0 39 39" ><g fill="#84818c"><rect x="15.2" y="0" width="8.6" height="39" rx="1.5" transform="rotate(0 19.5 19.5)"/><rect x="15.2" y="0" width="8.6" height="39" rx="1.5" transform="rotate(45 19.5 19.5)"/><rect x="15.2" y="0" width="8.6" height="39" rx="1.5" transform="rotate(90 19.5 19.5)"/><rect x="15.2" y="0" width="8.6" height="39" rx="1.5" transform="rotate(135 19.5 19.5)"/><circle cx="19.5" cy="19.5" r="14.5"/></g><circle cx="19.5" cy="19.5" r="6" fill="#23262e"/></svg>
<div class="abs" style="left:1326px;top:294px;width:36px;height:36px;border-radius:50%;background:#17a6f2"></div>
<div class="t" style="left:1326px;top:294px;width:36px;text-align:center;font:bold 22px 'Liberation Sans','Noto Sans CJK SC',sans-serif;line-height:36px;color:#fff">3</div>
<div class="abs" style="left:1404px;top:66px;width:24px;height:24px;background:#fbc02d;"></div>
<div class="t" style="left:1410px;top:73px;font:bold 14px 'Liberation Sans','Noto Sans CJK SC',sans-serif;line-height:18px;color:#2a2a2a;letter-spacing:-0.5px">JS</div>
<div class="t" style="left:1444.5px;top:64.9px;font:normal normal 26px 'Liberation Sans','Noto Sans CJK SC',sans-serif;line-height:31.2px;letter-spacing:0.675px;color:#1de9c0;">GuestbookGrid.js</div>
<svg class="ic" style="left:1675.5px;top:72.5px" width="17" height="17" viewBox="0 0 17 17" ><path d="M1.5 1.5L15.5 15.5M15.5 1.5L1.5 15.5" stroke="#fff" stroke-width="4.6"/></svg>
<svg class="ic" style="left:2256px;top:66px" width="27" height="27" viewBox="-2 -3 26 26" ><g transform="rotate(45 11 11)" fill="#fff"><path d="M6.5 0h9v2.2l-1.7 1.2v6.2l3.4 3.6v1.6H4.8v-1.6l3.4-3.6V3.4L6.5 2.2z"/><path d="M10.3 14.8h1.4l-.7 9.5z"/></g></svg>
<svg class="ic" style="left:2315px;top:65.5px" width="30" height="29" viewBox="0 0 30 29" ><g fill="none" stroke="#c8c8c8" stroke-width="2.4"><path d="M12 6V1.500h10.500l5 5V19h-5"/><path d="M22 1.500v5.500h5.500" stroke-width="1.800"/><path d="M7 11H1.500v15.500H15V23"/></g><circle cx="15" cy="15" r="5.800" fill="none" stroke="#59a8ec" stroke-width="2.800"/><path d="M19 19.500l8 7" stroke="#59a8ec" stroke-width="3.200"/></svg>
<svg class="ic" style="left:2380px;top:68.5px" width="24" height="25" viewBox="0 0 24 25" ><path d="M1 0.500L23.500 12.500 1 24.500z" fill="#bdbdbd"/></svg>
<svg class="ic" style="left:2442px;top:68px" width="28" height="24" viewBox="0 0 28 24" ><rect x="1.5" y="3" width="25" height="19.5" fill="none" stroke="#c8c8c8" stroke-width="3"/><rect x="0" y="0" width="28" height="6" fill="#c8c8c8"/><rect x="12.5" y="3" width="3" height="20" fill="#c8c8c8"/></svg>
<svg class="ic" style="left:2505.5px;top:76px" width="28" height="7" viewBox="0 0 28 7" ><circle cx="3.2" cy="3.2" r="3.2" fill="#c8c8c8"/><circle cx="13.5" cy="3.2" r="3.2" fill="#c8c8c8"/><circle cx="23.8" cy="3.2" r="3.2" fill="#c8c8c8"/></svg>
<div class="sel" style="left:1597px;top:618px;width:216px;background:#755b24;border-radius:0"></div>
<div class="sel" style="left:1511px;top:654px;width:403.5px;background:#755b24;border-radius:0 4px 4px 0"></div>
<div class="sel" style="left:1511px;top:690px;width:302px;background:#755b24;border-radius:0"></div>
<div class="sel" style="left:1511px;top:726px;width:316px;background:#755b24;border-radius:0 0 4px 4px"></div>
<div class="g" style="left:1510.5px;top:402px;height:144px;background:#393c46"></div>
<div class="g" style="left:1510.5px;top:582px;height:72px;background:#393c46"></div>
<div class="g" style="left:1510.5px;top:654px;height:108px;background:#5c4a22"></div>
<div class="g" style="left:1510.5px;top:762px;height:72px;background:#393c46"></div>
<div class="g" style="left:1539.5px;top:438px;height:108px;background:#393c46"></div>
<div class="g" style="left:1539.5px;top:582px;height:72px;background:#393c46"></div>
<div class="g" style="left:1539.5px;top:654px;height:108px;background:#5c4a22"></div>
<div class="g" style="left:1539.5px;top:762px;height:36px;background:#393c46"></div>
<div class="g" style="left:1568.5px;top:474px;height:36px;background:#393c46"></div>
<div class="g" style="left:1568.5px;top:618px;height:36px;background:#8d878d"></div>
<div class="g" style="left:1568.5px;top:654px;height:108px;background:#5c4a22"></div>
<div class="g" style="left:1597px;top:654px;height:72px;background:#4a3c1e"></div>
<div class="abs" style="left:1468px;top:438px;width:6px;height:36px;background:#2e6fba;"></div>
<div class="nums" style="left:1377px;top:114px;color:#77737c"><div class="num">1</div><div class="num">2</div><div class="num">3</div><div class="num">4</div><div class="num">5</div><div class="num">6</div><div class="num">7</div><div class="num">8</div><div class="num">9</div><div class="num">10</div><div class="num">11</div><div class="num">12</div><div class="num">13</div><div class="num">14</div><div class="num">15</div><div class="num">16</div><div class="num">17</div><div class="num">18</div><div class="num">19</div><div class="num">20</div><div class="num">21</div><div class="num">22</div><div class="num">23</div></div>
<div class="code an" style="left:1511.5px;top:114px"><div class="ln"><span class="k">import</span> <span class="v">GridArrow</span> <span class="k">from</span> <span class="q">"</span><span class="s">./GridArrow</span><span class="q">"</span><span class="p">;</span></div><div class="ln"><span class="k">import</span> <span class="v">GuestbookGridCell</span> <span class="k">from</span> <span class="q">"</span><span class="s">./GuestbookGridCell</span><span class="q">"</span><span class="p">;</span></div><div class="ln"><span class="k">import</span> <span class="v">React</span><span class="p">,</span> <span class="b0">{</span> <span class="v">Component</span> <span class="b0">}</span> <span class="k">from</span> <span class="q">"</span><span class="s">react</span><span class="q">"</span><span class="p">;</span></div><div class="ln"><span class="k">import</span> <span class="v">styled</span> <span class="k">from</span> <span class="q">"</span><span class="s">styled-components</span><span class="q">"</span><span class="p">;</span></div><div class="ln">&nbsp;</div><div class="ln"><span class="k">import</span> <span class="v">logoImageUrl</span> <span class="k">from</span> <span class="q">"</span><span class="s">./logo.svg</span><span class="q">"</span><span class="p">;</span></div><div class="ln">&nbsp;</div><div class="ln"><span class="k">export</span> <span class="k">default</span> <span class="st">class</span> <span class="cn">GuestbookGrid</span> <span class="ex">extends</span> <span class="cn inh">Component</span> <span class="b0">{</span></div><div class="ln">  <span class="fn">render</span><span class="b1">(</span><span class="b1">)</span> <span class="b1">{</span></div><div class="ln">    <span class="st">const</span> <span class="v">cells</span> <span class="op">=</span> <span class="th">this</span><span class="p">.</span><span class="v">props</span><span class="p">.</span><span class="v">signatures</span><span class="p">.</span><span class="fc">map</span><span class="b2 pd">(</span><span class="b0">(</span><span class="b1">{</span> <span class="v">signature</span> <span class="b1">}</span><span class="b0">)</span> <span class="ar"><i>⇒</i></span> <span class="b0">(</span></div><div class="ln">      <span class="tp">&lt;</span><span class="tg">GuestbookGridCell</span> <span class="at">signature</span><span class="op">=</span><span class="b1">{</span><span class="v">signature</span><span class="b1">}</span> <span class="at">key</span><span class="op">=</span><span class="b1">{</span><span class="v">signature</span><span class="b1">}</span> <span class="tp">/&gt;</span></div><div class="ln">    <span class="b0 pd">)</span><span class="b2 pd">)</span><span class="p">;</span></div><div class="ln">&nbsp;</div><div class="ln">    <span class="k">return</span> <span class="b2 pd">(</span></div><div class="ln">      <span class="tp">&lt;</span><span class="tg">GridContainer</span><span class="tp">&gt;</span></div><div class="ln">        <span class="tp">&lt;</span><span class="tg">Grid</span><span class="tp">&gt;</span><span class="b0">{</span><span class="v">cells</span><span class="b0">}</span><span class="tp">&lt;/</span><span class="tg">Grid</span><span class="tp">&gt;</span></div><div class="ln">        <span class="tp">&lt;</span><span class="tg">GridArrow</span> <span class="tp">/&gt;</span></div><div class="ln">      <span class="tp">&lt;/</span><span class="tg">GridContainer</span><span class="tp">&gt;</span></div><div class="ln">    <span class="b2 pd">)</span><span class="p">;</span></div><div class="ln">  <span class="b1">}</span></div><div class="ln"><span class="b0">}</span></div><div class="ln">&nbsp;</div><div class="ln"><span class="st">const</span> <span class="v">Grid</span> <span class="op">=</span> <span class="tf">styled</span><span class="p">.</span><span class="tf">div</span><span class="tf">`</span></div></div>
<div class="abs" style="left:1596px;top:586px;width:216px;height:35.5px;background:#fdb515;border-radius:5px"></div>
<div class="t" style="left:1603.5px;top:585px;font:bold 22px 'DejaVu Sans Mono','Liberation Mono',monospace;line-height:35px;color:#050505;letter-spacing:0.12px;-webkit-text-stroke:.5px #050505">Jonathan Carter</div>
<div class="abs" style="left:2526px;top:114px;width:28px;height:803px;background:#23262e;box-shadow:inset 1px 0 0 #3a3d47"></div>
<div class="abs" style="left:2527px;top:226px;width:12px;height:12px;background:#1a64a3;"></div>
<div class="abs" style="left:2527px;top:284px;width:27px;height:17px;background:#b98a1c;"></div>
<div class="abs" style="left:2527px;top:498px;width:27px;height:4px;background:#c9c9c9;"></div>
<div class="abs" style="left:1378px;top:917px;width:1176px;height:683px;background:#23262e;"></div>
<div class="abs" style="left:1378px;top:916px;width:1176px;height:2px;background:#474a53;"></div>
<div class="t" style="left:1451.0px;top:938.0px;font:normal normal 22.5px 'Liberation Sans','Noto Sans CJK SC',sans-serif;line-height:27.0px;letter-spacing:0.422px;color:#77747d;">PROBLEMS</div>
<div class="t" style="left:1651.5px;top:938.0px;font:normal normal 22.5px 'Liberation Sans','Noto Sans CJK SC',sans-serif;line-height:27.0px;letter-spacing:0.605px;color:#ececec;">TERMINAL</div>
<svg class="ic" style="left:1858px;top:950px" width="27" height="7" viewBox="0 0 27 7" ><circle cx="3.1" cy="3.1" r="3.1" fill="#c8c8c8"/><circle cx="13.1" cy="3.1" r="3.1" fill="#c8c8c8"/><circle cx="23.1" cy="3.1" r="3.1" fill="#c8c8c8"/></svg>
<div class="abs" style="left:1921px;top:939px;width:231px;height:33px;border:1px solid #363944;border-radius:9px;background:#2a2d37"></div>
<div class="t" style="left:1938.5px;top:942.5px;font:normal normal 22.5px 'Liberation Sans','Noto Sans CJK SC',sans-serif;line-height:27.0px;letter-spacing:0.392px;color:#f2f2f2;">2: bash [Shared]</div>
<svg class="ic" style="left:2133.5px;top:947px" width="11" height="19" viewBox="0 0 11 19" ><path d="M5.5 0L11 7.5H0zM5.5 19L11 11.5H0z" fill="#e0e0e0"/></svg>
<svg class="ic" style="left:2192px;top:944.5px" width="22" height="22" viewBox="0 0 22 22" ><path d="M11 0v22M0 11h22" stroke="#c8c8c8" stroke-width="6"/></svg>
<svg class="ic" style="left:2252px;top:942px" width="28" height="24" viewBox="0 0 28 24" ><rect x="1.5" y="3" width="25" height="19.5" fill="none" stroke="#c8c8c8" stroke-width="3"/><rect x="0" y="0" width="28" height="6" fill="#c8c8c8"/><rect x="12.5" y="3" width="3" height="20" fill="#c8c8c8"/></svg>
<svg class="ic" style="left:2318px;top:940.5px" width="22" height="28" viewBox="0 0 22 28" ><path d="M7 4V1.5h8V4" fill="none" stroke="#c8c8c8" stroke-width="2.6"/><rect x="0" y="3.5" width="22" height="3.6" fill="#c8c8c8"/><path d="M2.2 8.5h17.6v16.5a2.5 2.5 0 0 1-2.5 2.5H4.7a2.5 2.5 0 0 1-2.5-2.5z" fill="#c8c8c8"/></svg>
<svg class="ic" style="left:2318px;top:940.5px" width="22" height="28" viewBox="0 0 22 28" ><path d="M7.2 10.5v13M11 10.5v13M14.8 10.5v13" stroke="#23262e" stroke-width="1.8"/></svg>
<svg class="ic" style="left:2380px;top:946.5px" width="24" height="16" viewBox="0 0 24 16" ><path d="M1.5 14L12 3l10.5 11" fill="none" stroke="#c8c8c8" stroke-width="3.6"/></svg>
<svg class="ic" style="left:2442px;top:942px" width="28" height="24" viewBox="0 0 28 24" ><rect x="1.5" y="1.5" width="25" height="21" fill="none" stroke="#c8c8c8" stroke-width="3"/><rect x="16.5" y="0" width="11.5" height="24" fill="#c8c8c8"/></svg>
<svg class="ic" style="left:2510px;top:946px" width="17" height="17" viewBox="0 0 17 17" ><path d="M1.5 1.5L15.5 15.5M15.5 1.5L1.5 15.5" stroke="#f0f0f0" stroke-width="5"/></svg>
<div class="term rterm" style="left:1418px;top:991px"><div><span class="pass"> PASS </span> <span class="d">src/</span><b>LiveShare.test.js</b></div><div>  <span class="g ck">✓</span> <span class="d">allows real-time editing (2ms)</span></div><div>  <span class="g ck">✓</span> <span class="d">supports collaborative debugging (1ms)</span></div><div>  <span class="g ck">✓</span> <span class="d">enables sharing remote terminals</span></div><div>&nbsp;</div><div><b>Test Suites: </b><span class="g">1 passed</span>, 1 total</div><div><b>Tests:       </b><span class="g">3 passed</span>, 3 total</div><div><b>Snapshots:   </b>0 total</div><div><b>Time:</b>        1.841s, estimated 2s</div><div><span class="d">Ran all test suites related to changed files.</span></div><div>&nbsp;</div><div><b>Watch Usage</b></div><div><span class="d"> › Press </span>a<span class="d"> to run all tests.</span></div><div><span class="d"> › Press </span>p<span class="d"> to filter by a filename regex pattern.</span></div><div><span class="d"> › Press </span>t<span class="d"> to filter by a test name regex pattern.</span></div><div><span class="d"> › Press </span>q<span class="d"> to quit watch mode.</span></div><div><span class="d"> › Press </span>Enter<span class="d"> to trigger a test run.</span></div></div>
<div class="abs" style="left:1418px;top:1467px;width:10px;height:24px;border:2px solid #e8e8e8"></div>
<svg class="ic" style="left:1307px;top:1565px" width="18" height="26" viewBox="0 0 18 26" ><g fill="none" stroke="#fff" stroke-width="2.4"><circle cx="4.500" cy="4" r="2.800"/><circle cx="4.500" cy="22" r="2.800"/><circle cx="14" cy="8" r="2.800"/><path d="M4.500 7v12M14 11c0 5-9.500 4-9.500 8"/></g></svg>
<div class="t" style="left:1332.5px;top:1562.8px;font:normal normal 24.5px 'Liberation Sans','Noto Sans CJK SC',sans-serif;line-height:29.4px;letter-spacing:0.763px;color:#fff;-webkit-text-stroke:.7px currentColor;">master*</div>
<svg class="ic" style="left:1452px;top:1566px" width="24" height="24" viewBox="0 0 24 24" ><g fill="none" stroke="#fff" stroke-width="3"><path d="M3 10.500A9.500 9.500 0 0 1 20 7"/><path d="M21 13.500A9.500 9.500 0 0 1 4 17"/></g><path d="M22.500 1.500v8h-8z" fill="#fff"/><path d="M1.500 22.500v-8h8z" fill="#fff"/></svg>
<svg class="ic" style="left:1499.5px;top:1567.5px" width="22" height="22" viewBox="0 0 22 22" ><circle cx="11" cy="11" r="11" fill="#fff"/><path d="M6 6l10 10M16 6L6 16" stroke="#23262e" stroke-width="3.2"/></svg>
<div class="t" style="left:1530.5px;top:1562.8px;font:normal normal 24.5px 'Liberation Sans','Noto Sans CJK SC',sans-serif;line-height:29.4px;letter-spacing:-0.141px;color:#fff;-webkit-text-stroke:.7px currentColor;">0</div>
<svg class="ic" style="left:1554px;top:1567px" width="22" height="22" viewBox="0 0 22 22" ><path d="M11 1L22 21H0z" fill="#fff" stroke="#fff" stroke-width="1" stroke-linejoin="round"/><path d="M11 8v7" stroke="#23262e" stroke-width="2.8"/><circle cx="11" cy="18" r="1.6" fill="#23262e"/></svg>
<div class="t" style="left:1585.5px;top:1562.8px;font:normal normal 24.5px 'Liberation Sans','Noto Sans CJK SC',sans-serif;line-height:29.4px;letter-spacing:-0.141px;color:#fff;-webkit-text-stroke:.7px currentColor;">0</div>
<div class="t" style="left:1729.0px;top:1562.8px;font:normal normal 24.5px 'Liberation Sans','Noto Sans CJK SC',sans-serif;line-height:29.4px;letter-spacing:0.005px;color:#fff;-webkit-text-stroke:.7px currentColor;">Ln 32, Col 11</div>
<div class="t" style="left:1903.5px;top:1562.8px;font:normal normal 24.5px 'Liberation Sans','Noto Sans CJK SC',sans-serif;line-height:29.4px;letter-spacing:0.254px;color:#fff;-webkit-text-stroke:.7px currentColor;">Spaces: 2</div>
<div class="t" style="left:2045.5px;top:1562.8px;font:normal normal 24.5px 'Liberation Sans','Noto Sans CJK SC',sans-serif;line-height:29.4px;letter-spacing:0.520px;color:#fff;-webkit-text-stroke:.7px currentColor;">UTF-8</div>
<div class="t" style="left:2149.0px;top:1562.8px;font:normal normal 24.5px 'Liberation Sans','Noto Sans CJK SC',sans-serif;line-height:29.4px;letter-spacing:-2.094px;color:#fff;-webkit-text-stroke:.7px currentColor;">LF</div>
<div class="t" style="left:2205.5px;top:1562.8px;font:normal normal 24.5px 'Liberation Sans','Noto Sans CJK SC',sans-serif;line-height:29.4px;letter-spacing:0.623px;color:#fff;-webkit-text-stroke:.7px currentColor;">JavaScript</div>
<div class="t" style="left:2386.5px;top:1562.8px;font:normal normal 24.5px 'Liberation Sans','Noto Sans CJK SC',sans-serif;line-height:29.4px;letter-spacing:0.076px;color:#fff;-webkit-text-stroke:.7px currentColor;">Prettier</div>
<svg class="ic" style="left:2499px;top:1565px" width="24" height="27" viewBox="0 0 24 27" ><path d="M12 0.5a2 2 0 0 1 2 2v0.8c4 1 6 4.5 6 8.7 0 4.5 1.5 6 3.5 8v1.5H0.5V20c2-2 3.5-3.5 3.5-8 0-4.2 2-7.7 6-8.7V2.500a2 2 0 0 1 2-2z" fill="#fff"/><path d="M8.8 23h6.4a3.2 3.2 0 0 1-6.400 0z" fill="#fff"/></svg>
<div class="t" style="left:2353px;top:1538px;font:18px 'Liberation Sans','Noto Sans CJK SC',sans-serif;line-height:24px;color:#77777b;text-shadow:1px 1px 0 #15161a;letter-spacing:0.2px">@稀土掘金技术社区</div>
<div class="abs" style="left:2455px;top:1557px;width:42px;height:21px;border-radius:50%;background:linear-gradient(#b5474b,#a6191c)"></div>
<div class="t" style="left:2455px;top:1557px;width:42px;text-align:center;font:italic 19px 'Liberation Sans','Noto Sans CJK SC',sans-serif;line-height:17px;color:#d4c4c4">php</div>
<div class="t" style="left:2502px;top:1558px;font:13.5px 'Liberation Sans','Noto Sans CJK SC',sans-serif;line-height:18px;color:#4f2f30">中文网</div>
</body></html>
